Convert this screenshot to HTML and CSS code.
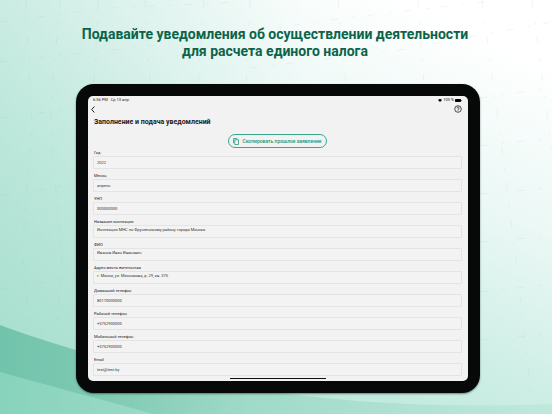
FILE: index.html
```html
<!DOCTYPE html>
<html lang="ru">
<head>
    <meta charset="UTF-8">
    <meta name="viewport" content="width=device-width, initial-scale=1.0">
    <title>Подача уведомлений</title>
    <link rel="stylesheet" href="styles.css">
</head>
<body>
    <!-- Background waves and grid -->
    <svg class="backdrop" viewBox="0 0 552 414" preserveAspectRatio="none" aria-hidden="true">
        <defs>
            <linearGradient id="band" x1="0" y1="0" x2="1" y2="0">
                <stop offset="0" stop-color="#72c3ab"/>
                <stop offset="0.2" stop-color="#80cab4"/>
                <stop offset="0.45" stop-color="#a0dac9"/>
                <stop offset="1" stop-color="#bfe8dc"/>
            </linearGradient>
            <linearGradient id="corner" x1="0" y1="0" x2="1" y2="0">
                <stop offset="0" stop-color="#87d3bc"/>
                <stop offset="1" stop-color="#9cdac8"/>
            </linearGradient>
        </defs>
        <g class="grid-lines">
            <path d="M0 22L110 8L240 2M0 62L150 46L330 20L552 -6M0 118L76 108M0 196L76 184M0 290L76 276M250 68L400 50L552 22M480 98L552 88M480 146L552 138M480 194L552 188M480 242L552 236M480 292L552 284M480 340L552 334"/>
            <path d="M26 0L32 130L22 250L30 330M60 0L50 120L62 260L56 330M98 0L94 84M145 0L150 84M204 0L198 84M250 0L246 84M338 0L346 84M418 0L424 84M482 0L502 150L516 260L532 400M532 0L552 150"/>
        </g>
        <path fill="url(#band)" d="M0 325C45 342 110 361 190 378C290 398 410 410 552 404V414H0Z"/>
        <path fill="url(#corner)" d="M0 372C50 386 100 399 153 414H0Z"/>
    </svg>

    <main class="promo">
        <h1>Подавайте уведомления об осуществлении деятельности для расчета единого налога</h1>

        <!-- Tablet -->
        <div class="tablet">
            <div class="screen">
                <div class="status-bar">
                    <span>6:56 PM</span>
                    <span>Ср 13 апр.</span>
                    <div class="status-icons">
                        <svg class="wifi" viewBox="0 0 12 9"><path d="M0 3Q6 -3 12 3L6 9Z"/></svg>
                        <span>100 %</span>
                        <svg class="battery" viewBox="0 0 14 6"><rect width="12" height="6" rx="1.5"/><rect x="12.6" y="2" width="1.2" height="2"/></svg>
                    </div>
                </div>

                <div class="nav-bar">
                    <button type="button" aria-label="Назад">
                        <svg class="back-icon" viewBox="0 0 4 7"><path d="M3.4 0.5L0.7 3.5L3.4 6.5"/></svg>
                    </button>
                    <button type="button" aria-label="Помощь">
                        <svg class="help-icon" viewBox="0 0 8 8"><circle cx="4" cy="4" r="3.3"/><path d="M2.9 3.3C2.9 1.7 5.2 1.8 5.1 3.2C5.1 4 4 4 4 4.9M4 5.4V6"/></svg>
                    </button>
                </div>

                <h2>Заполнение и подача уведомлений</h2>

                <form class="notice-form">
                    <button type="button" class="copy-button">
                        <svg viewBox="0 0 12 14"><path d="M3.5 3.5H11V13H3.5ZM1 10.5V1H8.5"/></svg>
                        Скопировать прошлое заявление
                    </button>

                    <div class="field">
                        <label for="year">Год</label>
                        <input type="text" id="year" value="2022">
                    </div>
                    <div class="field">
                        <label for="month">Месяц</label>
                        <input type="text" id="month" value="апрель">
                    </div>
                    <div class="field">
                        <label for="unp">УНП</label>
                        <input type="text" id="unp" value="000000000">
                    </div>
                    <div class="field">
                        <label for="inspection">Название инспекции</label>
                        <textarea id="inspection" rows="1">Инспекция МНС по Фрунзенскому району города Минска</textarea>
                    </div>
                    <div class="field">
                        <label for="fio">ФИО</label>
                        <textarea id="fio" rows="1">Иванов Иван Иванович</textarea>
                    </div>
                    <div class="field">
                        <label for="address">Адрес места жительства</label>
                        <textarea id="address" rows="1">г. Минск, ул. Мясникова, д. 29, кв. 375</textarea>
                    </div>
                    <div class="field">
                        <label for="home-phone">Домашний телефон</label>
                        <input type="tel" id="home-phone" value="80170000000">
                    </div>
                    <div class="field">
                        <label for="work-phone">Рабочий телефон</label>
                        <input type="tel" id="work-phone" value="+3752900000">
                    </div>
                    <div class="field">
                        <label for="mobile-phone">Мобильный телефон</label>
                        <input type="tel" id="mobile-phone" value="+3752900000">
                    </div>
                    <div class="field">
                        <label for="email">Email</label>
                        <input type="email" id="email" value="test@test.by">
                    </div>
                </form>

                <div class="home-indicator"></div>
            </div>
        </div>
    </main>
</body>
</html>
```
FILE: styles.css
```css
/* General styles */
* {
    box-sizing: border-box;
}

body {
    margin: 0;
    min-height: 100vh;
    font-family: Roboto, sans-serif;
    color: #222;
    background:
        linear-gradient(to right, rgba(150, 216, 196, 0.35), rgba(255, 255, 255, 0) 55%),
        linear-gradient(25deg, #a8dfcd 0%, #cdeee5 40%, #ebf8f5 65%, #ffffff 90%);
}

.backdrop {
    position: absolute;
    inset: 0;
    width: 100%;
    height: 100%;
    z-index: -1;
}

.grid-lines {
    fill: none;
    stroke: #7fa59a;
    stroke-opacity: 0.1;
    stroke-dasharray: 8 14 3 12;
}

.promo {
    padding: 26px 72px 20px 76px;
}

h1 {
    margin: 0 0 24px;
    padding-right: 6px;
    font-size: 14px;
    line-height: 17px;
    font-weight: 700;
    text-align: center;
    color: #0c6349;
}

/* Tablet */
.tablet {
    padding: 12px;
    border-radius: 18px;
    background: #070909;
    box-shadow: 0 1px 2px rgba(0, 40, 30, 0.5);
}

.screen {
    padding: 2px 6px 2px 5px;
    border-radius: 5px;
    background: #f2f2f2;
}

.status-bar {
    display: flex;
    align-items: center;
    gap: 3px;
    height: 4px;
    font-size: 4px;
    line-height: 4px;
}

.status-icons {
    display: flex;
    align-items: center;
    gap: 1px;
    margin-left: auto;
}

.wifi {
    width: 4px;
    height: 3px;
}

.battery {
    width: 7px;
    height: 3px;
}

.nav-bar {
    display: flex;
    align-items: center;
    justify-content: space-between;
    height: 14px;
    margin-left: -2px;
}

.nav-bar button {
    display: flex;
    padding: 0;
    border: none;
    background: none;
    cursor: pointer;
}

.nav-bar svg {
    fill: none;
    stroke: #222;
}

.back-icon {
    width: 4px;
    height: 7px;
}

.help-icon {
    width: 8px;
    height: 8px;
    stroke-width: 0.8;
}

h2 {
    margin: 1px 0 7px 1px;
    font-size: 7px;
    line-height: 10px;
    font-weight: 700;
}

/* Form */
.notice-form {
    display: flex;
    flex-direction: column;
    gap: 3px;
}

.copy-button {
    display: flex;
    align-items: center;
    align-self: center;
    gap: 3px;
    height: 14px;
    margin-bottom: -2px;
    padding: 0 4px;
    border: 1px solid #3aa78d;
    border-radius: 7px;
    background: none;
    font-family: inherit;
    font-size: 5px;
    font-weight: 500;
    color: #1b957a;
    cursor: pointer;
}

.copy-button svg {
    width: 6px;
    height: 7px;
    fill: none;
    stroke: #1b957a;
    stroke-width: 1.5;
}

.field {
    display: flex;
    flex-direction: column;
}

label {
    padding-left: 1px;
    font-size: 4px;
    line-height: 7px;
}

input,
textarea {
    display: block;
    width: 100%;
    height: 13px;
    margin: 0;
    padding: 2px 3px;
    border: 1px solid #e4e4e4;
    border-radius: 1px;
    outline: none;
    background: #f3f3f3;
    font-family: inherit;
    font-size: 4px;
    line-height: 5px;
    color: #333;
}

textarea {
    padding-top: 1px;
    resize: none;
    overflow: hidden;
}

.home-indicator {
    width: 96px;
    height: 1px;
    margin: 2px auto 0;
    background: #111;
}
```
